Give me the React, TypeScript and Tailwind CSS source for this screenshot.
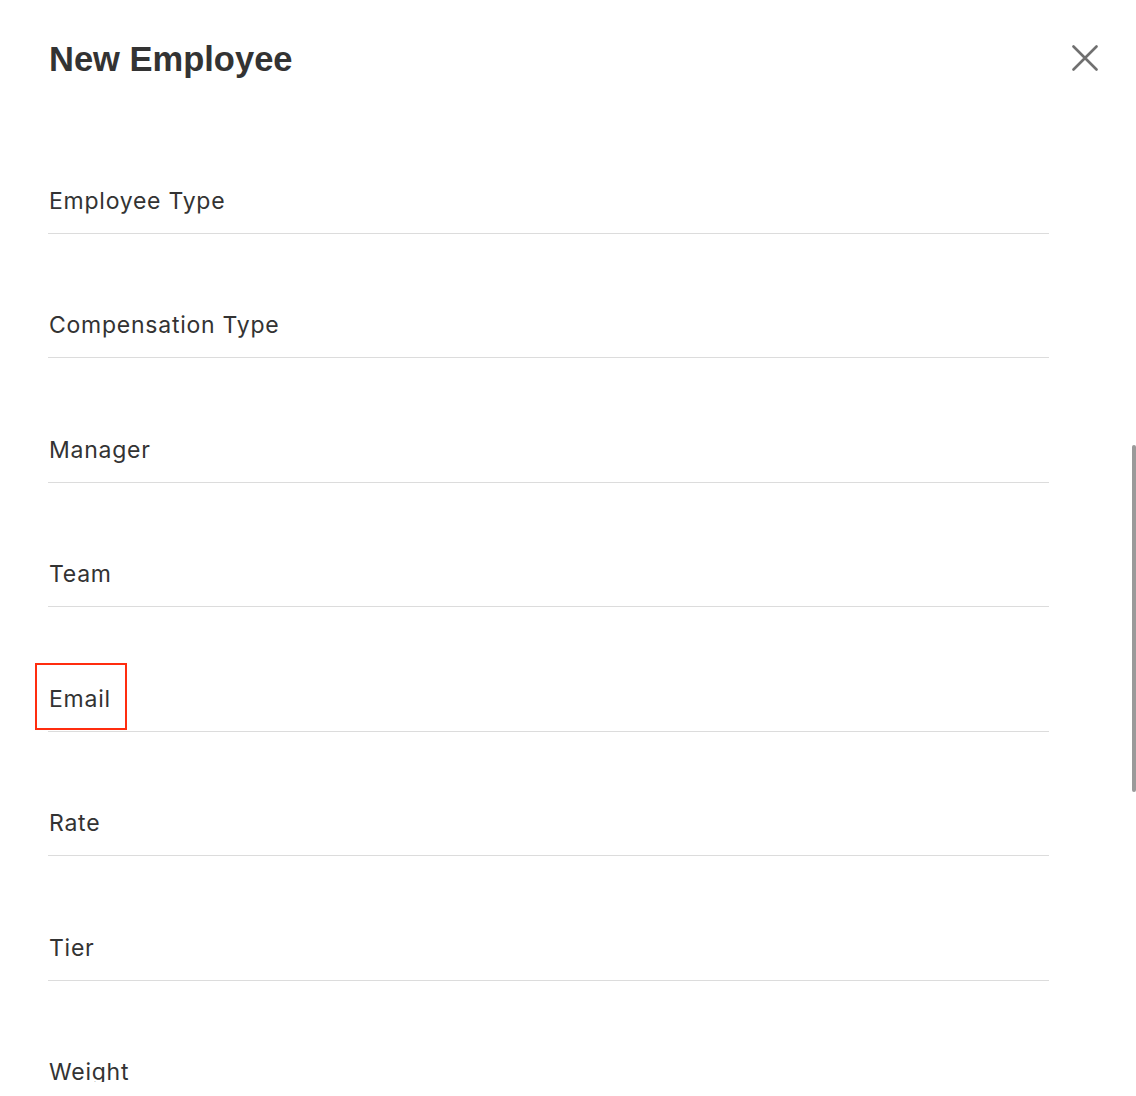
import React from 'react';

const fields = ['Employee Type', 'Compensation Type', 'Manager', 'Team', 'Email', 'Rate', 'Tier', 'Weight'];

const CloseIcon = () => (
  <svg width="26" height="26" viewBox="0 0 26 26" fill="none" stroke="#707070" strokeWidth="2.6" strokeLinecap="round">
    <path d="M1.5 1.5L24.5 24.5M24.5 1.5L1.5 24.5" />
  </svg>
);

const FieldRow = ({ label, highlighted }: { label: string; highlighted?: boolean }) => (
  <div className="flex h-[124.5px] flex-col justify-end border-b border-[#dcdcdc] pb-[19px]">
    <span className="relative ml-px self-start text-[23px] leading-[26px] tracking-[0.75px] text-[#333]">
      {label}
      {highlighted && (
        <span className="pointer-events-none absolute -top-[23px] -right-[16px] -bottom-[18px] -left-[14px] border-2 border-[#ff2d0f]" />
      )}
    </span>
  </div>
);

export default function App() {
  return (
    <div className="relative h-[1096px] w-[1136px] overflow-hidden bg-white font-['Inter',sans-serif]">
      <div className="flex h-[1082px] flex-col overflow-hidden">
        <header className="flex h-[109px] shrink-0 items-start justify-between pl-[49px] pr-[38px] pt-[39px]">
          <h2 className="font-['Liberation_Sans',Arial,sans-serif] text-[34.5px] leading-[40px] font-bold text-[#333]">
            New Employee
          </h2>
          <button type="button" className="mt-[6px]">
            <CloseIcon />
          </button>
        </header>
        <form className="pl-[48px] pr-[87px]">
          {fields.map((f) => (
            <FieldRow key={f} label={f} highlighted={f === 'Email'} />
          ))}
        </form>
      </div>
      {/* overlay scrollbar thumb */}
      <div className="absolute right-0 top-[445px] h-[347px] w-[4px] rounded-full bg-[#9a9a9a]" />
    </div>
  );
}
